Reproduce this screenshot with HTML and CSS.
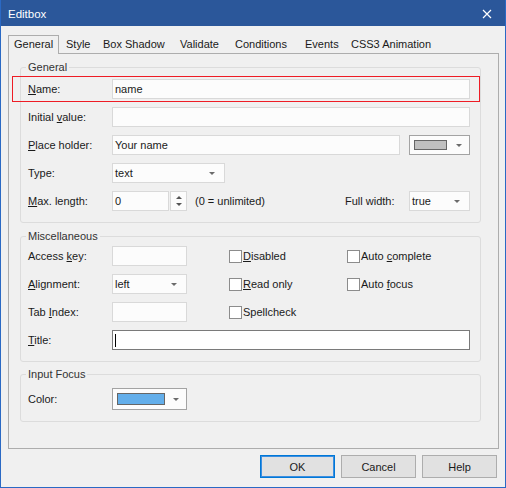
FILE: index.html
```html
<!DOCTYPE html>
<html lang="en">
<head>
<meta charset="utf-8">
<title>Editbox</title>
<link rel="stylesheet" href="styles.css">
</head>
<body>
<div class="window">
  <div class="titlebar">
    <span class="title">Editbox</span>
    <svg class="close" width="10" height="10" viewBox="0 0 10 10"><path d="M1 1L9 9M9 1L1 9" stroke="#fff" stroke-width="1.2" fill="none"/></svg>
  </div>
  <div class="client">
    <div class="tabs">
      <div class="tab active">General</div>
      <div class="tab t-style">Style</div>
      <div class="tab t-shadow">Box Shadow</div>
      <div class="tab t-validate">Validate</div>
      <div class="tab t-cond">Conditions</div>
      <div class="tab t-events">Events</div>
      <div class="tab t-anim">CSS3 Animation</div>
    </div>
    <div class="panel">
      <fieldset class="group g-general">
        <legend>General</legend>
        <div class="rows">
          <div class="highlight">
            <div class="row">
              <span class="lbl"><u>N</u>ame:</span>
              <div class="field grow">name</div>
            </div>
          </div>
          <div class="row">
            <span class="lbl">Initial <u>v</u>alue:</span>
            <div class="field grow"></div>
          </div>
          <div class="row">
            <span class="lbl"><u>P</u>lace holder:</span>
            <div class="field ph">Your name</div>
            <div class="colordd cd-small"><span class="swatch sw-gray"></span><span class="arrow"></span></div>
          </div>
          <div class="row">
            <span class="lbl">Type:</span>
            <div class="field select sel-type"><span>text</span><span class="arrow"></span></div>
          </div>
          <div class="row">
            <span class="lbl"><u>M</u>ax. length:</span>
            <div class="field num">0</div>
            <div class="spin"><span class="up"></span><span class="down"></span></div>
            <span class="hint">(0 = unlimited)</span>
            <div class="fw">
              <span class="fw-lbl">Full width:</span>
              <div class="field select sel-fw"><span>true</span><span class="arrow"></span></div>
            </div>
          </div>
        </div>
      </fieldset>

      <fieldset class="group g-misc">
        <legend>Miscellaneous</legend>
        <div class="misc-grid">
          <span class="lbl">Access <u>k</u>ey:</span>
          <div class="field short"></div>
          <label class="check"><span class="box"></span><span><u>D</u>isabled</span></label>
          <label class="check"><span class="box"></span><span>Auto <u>c</u>omplete</span></label>

          <span class="lbl"><u>A</u>lignment:</span>
          <div class="field select short"><span>left</span><span class="arrow"></span></div>
          <label class="check"><span class="box"></span><span><u>R</u>ead only</span></label>
          <label class="check"><span class="box"></span><span>Auto <u>f</u>ocus</span></label>

          <span class="lbl">Tab <u>I</u>ndex:</span>
          <div class="field short"></div>
          <label class="check"><span class="box"></span><span>Spellcheck</span></label>
          <span></span>

          <span class="lbl"><u>T</u>itle:</span>
          <div class="field focus span-rest"><span class="caret"></span></div>
        </div>
      </fieldset>

      <fieldset class="group g-focus">
        <legend>Input Focus</legend>
        <div class="row row-tall">
          <span class="lbl">Color:</span>
          <div class="colordd cd-large"><span class="swatch sw-blue"></span><span class="arrow"></span></div>
        </div>
      </fieldset>
    </div>
    <div class="buttons">
      <button class="btn default" type="button">OK</button>
      <button class="btn" type="button">Cancel</button>
      <button class="btn" type="button">Help</button>
    </div>
  </div>
</div>
</body>
</html>
```

FILE: styles.css
```css
html, body {
  margin: 0;
  padding: 0;
  background: #f0f0f0;
}
body {
  font-family: "Liberation Sans", Arial, sans-serif;
  font-size: 11px;
  line-height: 14px;
  color: #1a1a1a;
}
u {
  text-decoration: underline;
  text-underline-offset: 1px;
}
.window {
  width: 506px;
  height: 488px;
  box-sizing: border-box;
  border: 1px solid #2a69c4;
  border-top: 0;
  display: flex;
  flex-direction: column;
  overflow: hidden;
}
.titlebar {
  height: 26px;
  margin: 0 -1px;
  background: #2b579a;
  color: #fff;
  display: flex;
  align-items: center;
  padding: 1px 0 0 8px;
  box-sizing: border-box;
}
.title {
  font-size: 11.5px;
}
.close {
  margin-left: auto;
  margin-right: 14px;
  display: block;
}
.client {
  flex: 1;
  padding: 9px 6px 0 7px;
  display: flex;
  flex-direction: column;
}
.tabs {
  display: flex;
  height: 19px;
  margin-bottom: -1px;
  position: relative;
  z-index: 1;
}
.tab {
  padding: 2px 0 0 7px;
  height: 18px;
  box-sizing: border-box;
  white-space: nowrap;
  flex: none;
}
.t-style { width: 37px; }
.t-shadow { width: 77px; }
.t-validate { width: 55px; }
.t-cond { width: 70px; }
.t-events { width: 46px; }
.t-anim { width: 95px; }
.tab.active {
  width: 51px;
  height: 19px;
  padding: 1px 0 0 5px;
  border: 1px solid #adadad;
  border-bottom: 0;
  background: #f0f0f0;
}
.panel {
  height: 396px;
  box-sizing: border-box;
  border: 1px solid #adadad;
  padding: 6px 0 0 11px;
  display: flex;
  flex-direction: column;
}
.group {
  width: 461px;
  box-sizing: border-box;
  margin: 0;
  border: 1px solid #dcdcdc;
  border-radius: 3px;
  min-width: 0;
}
.group legend {
  padding: 0 2px;
  margin-left: -2px;
  line-height: 14px;
  color: #333;
}
.g-general {
  padding: 5px 10px 11px 7px;
}
.g-misc {
  margin-top: 6px;
  padding: 3px 10px 11px 7px;
}
.g-focus {
  margin-top: 5px;
  padding: 7px 10px 11px 7px;
}
.rows {
  display: flex;
  flex-direction: column;
  gap: 8px;
}
.row {
  display: flex;
  align-items: center;
  height: 20px;
}
.row-tall {
  height: 22px;
}
.highlight {
  margin: -3px -10px -3px -16px;
  padding: 2px 9px 2px 15px;
  border: 1px solid #ee1c25;
}
.lbl {
  width: 84px;
  flex: none;
  white-space: nowrap;
}
.field {
  height: 20px;
  box-sizing: border-box;
  border: 1px solid #d9d9d9;
  background: #fcfcfc;
  padding: 0 2px;
  line-height: 18px;
  white-space: nowrap;
}
.grow {
  flex: 1;
}
.ph {
  width: 288px;
}
.select {
  display: flex;
  align-items: center;
  justify-content: space-between;
}
.arrow {
  width: 0;
  height: 0;
  border-left: 3px solid transparent;
  border-right: 3px solid transparent;
  border-top: 3px solid #6b6b6b;
  margin-right: 7px;
  flex: none;
}
.sel-type {
  width: 113px;
}
.sel-fw {
  width: 61px;
}
.num {
  width: 57px;
}
.spin {
  width: 17px;
  height: 20px;
  box-sizing: border-box;
  margin-left: 1px;
  border: 1px solid #d9d9d9;
  background: #fcfcfc;
  display: flex;
  flex-direction: column;
  align-items: center;
  justify-content: center;
  gap: 4px;
}
.spin .up {
  width: 0;
  height: 0;
  border-left: 3px solid transparent;
  border-right: 3px solid transparent;
  border-bottom: 3px solid #555;
}
.spin .down {
  width: 0;
  height: 0;
  border-left: 3px solid transparent;
  border-right: 3px solid transparent;
  border-top: 3px solid #555;
}
.hint {
  margin-left: 8px;
  white-space: nowrap;
}
.fw {
  margin-left: auto;
  display: flex;
  align-items: center;
}
.fw-lbl {
  width: 64px;
  white-space: nowrap;
}
.colordd {
  box-sizing: border-box;
  border: 1px solid #a3a3a3;
  background: #fcfcfc;
  display: flex;
  align-items: center;
  justify-content: space-between;
  padding-left: 4px;
}
.cd-small {
  width: 61px;
  height: 20px;
  margin-left: 9px;
}
.cd-large {
  width: 75px;
  height: 22px;
}
.swatch {
  box-sizing: border-box;
  border: 1px solid #666;
  display: block;
}
.sw-gray {
  width: 33px;
  height: 10px;
  background: #c0c0c0;
}
.sw-blue {
  width: 48px;
  height: 12px;
  background: #63aeea;
}
.misc-grid {
  display: grid;
  grid-template-columns: 84px 117px 118px 1fr;
  grid-auto-rows: 20px;
  row-gap: 8px;
  align-items: center;
}
.short {
  width: 75px;
}
.span-rest {
  grid-column: 2 / -1;
}
.field.focus {
  border-color: #7a7a7a;
  background: #fff;
  display: flex;
  align-items: center;
}
.caret {
  display: block;
  width: 1px;
  height: 13px;
  background: #000;
}
.check {
  display: flex;
  align-items: center;
  gap: 1px;
  white-space: nowrap;
}
.box {
  width: 13px;
  height: 13px;
  box-sizing: border-box;
  border: 1px solid #8c8c8c;
  background: #fff;
  flex: none;
}
.buttons {
  display: flex;
  justify-content: flex-end;
  gap: 6px;
  margin-top: 6px;
  margin-right: 2px;
}
.btn {
  width: 75px;
  height: 23px;
  box-sizing: border-box;
  border: 1px solid #adadad;
  background: #e1e1e1;
  font-family: "Liberation Sans", Arial, sans-serif;
  font-size: 11px;
  color: #1a1a1a;
  padding: 0;
  margin: 0;
}
.btn.default {
  border-color: #0078d7;
  box-shadow: inset 0 0 0 1px #3c8ee0;
}
```
